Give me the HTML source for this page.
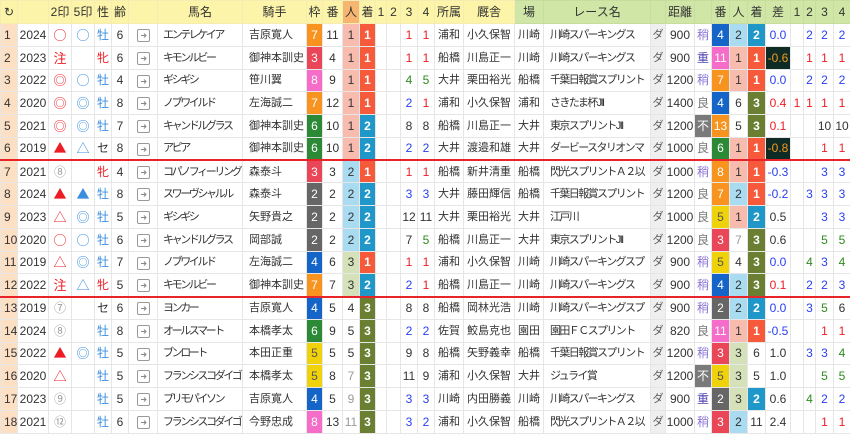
<!DOCTYPE html><html><head><meta charset="utf-8"><style>
body{margin:0;background:#fff;width:850px;height:433px;overflow:hidden}
table{border-collapse:collapse;table-layout:fixed;width:850px;font-family:"Liberation Sans","Noto Sans CJK JP",sans-serif;font-size:12px;color:#333}
td,th{padding:0;text-align:center;white-space:nowrap;overflow:hidden;border:1px solid #e6e6e6;line-height:20px}
th{font-weight:normal;height:22px;background:#fcf4a8;border-color:#f4ecb0;font-size:12px}
th.gr{background:#cfe6a6;border-color:#c6dd9e}
th.or{background:#f7b66f}
tr{height:22.75px}
td:first-child{background:#fddfc4;text-align:left;padding-left:3px}
td.l{text-align:left;padding-left:6px;font-size:11px;letter-spacing:-1.6px}
tr td.l:nth-child(8){letter-spacing:-2.4px;padding-left:5px}
td.j{text-align:left;padding-left:6px;font-size:11px;letter-spacing:0}
tr td:nth-child(3),tr td:nth-child(4){font-size:13px;font-family:"Noto Sans CJK JP",sans-serif}
tr td:nth-child(18),tr td:nth-child(19),tr td:nth-child(20){font-size:11px;letter-spacing:0}
.sep td{border-bottom:2px solid #e8232a}
.w1{background:#fff}.w2{background:#666;color:#fff}.w3{background:#e94657;color:#fff}.w4{background:#1565c8;color:#fff}.w5{background:#f0d20a;color:#555}.w6{background:#2c8a36;color:#fff}.w7{background:#f7931e;color:#fff}.w8{background:#f56dc9;color:#fff}
.p1{background:#f8bcaf}.p2{background:#a9dbf1}.p3{background:#d4e1b9}
.c1{background:#f65a3a;color:#fff;font-weight:bold}.c2{background:#1f97c9;color:#fff;font-weight:bold}.c3{background:#6a7f32;color:#fff;font-weight:bold}
.r{color:#ee1c24}.b{color:#2a3ff0}.g{color:#2e8a1e}.gy{color:#999}.sb{color:#3a8ee0}.lp{color:#8a74d6}.hv{color:#5046b0}.ok{color:#777}
td.gy{font-size:12px!important}
.da{background:#efefef;color:#555;font-size:11px}
.fu{background:#7a7a7a;color:#fff}
.dk{background:#0e2b26;color:#f59a1a}
.ar{display:inline-block;width:11px;height:11px;border:1px solid #999;border-radius:2px;vertical-align:middle;position:relative}
.ar svg{position:absolute;left:1px;top:1px}
</style></head><body>
<table>
<colgroup><col style="width:17px"><col style="width:31px"><col style="width:23px"><col style="width:23px"><col style="width:17px"><col style="width:17px"><col style="width:29px"><col style="width:85px"><col style="width:64px"><col style="width:16px"><col style="width:20px"><col style="width:17px"><col style="width:16px"><col style="width:11px"><col style="width:14px"><col style="width:17px"><col style="width:17px"><col style="width:29px"><col style="width:51px"><col style="width:29px"><col style="width:107px"><col style="width:15px"><col style="width:29px"><col style="width:17px"><col style="width:18px"><col style="width:18px"><col style="width:18px"><col style="width:25px"><col style="width:13px"><col style="width:12px"><col style="width:18px"><col style="width:17px"></colgroup>
<tr><th style="background:#fcf4a8">↻</th><th></th><th>2印</th><th>5印</th><th>性</th><th>齢</th><th></th><th>馬名</th><th>騎手</th><th>枠</th><th>番</th><th class="or">人</th><th>着</th><th>1</th><th>2</th><th>3</th><th>4</th><th>所属</th><th>厩舎</th><th class="gr">場</th><th class="gr">レース名</th><th class="gr"></th><th class="gr">距離</th><th class="gr"></th><th class="gr">番</th><th class="gr">人</th><th class="gr">着</th><th class="gr">差</th><th class="gr">1</th><th class="gr">2</th><th class="gr">3</th><th class="gr">4</th></tr>

<tr><td>1</td><td>2024</td><td class="r">○</td><td class="sb">○</td><td class="sb">牡</td><td>6</td><td><span class="ar"><svg width="9" height="9"><path d="M2 4.5H7M5 2.5L7 4.5L5 6.5" stroke="#888" fill="none"/></svg></span></td><td class="l">エンテレケイア</td><td class="j">吉原寛人</td><td class="w7">7</td><td>11</td><td class="p1">1</td><td class="c1">1</td><td></td><td></td><td class="r">1</td><td class="r">1</td><td>浦和</td><td>小久保智</td><td>川崎</td><td class="l">川崎スパーキングス</td><td class="da">ダ</td><td>900</td><td class="lp">稍</td><td class="w4">4</td><td class="p2">2</td><td class="c2">2</td><td class="b">0.0</td><td></td><td class="b">2</td><td class="b">2</td><td class="b">2</td></tr>
<tr><td>2</td><td>2023</td><td class="r">注</td><td></td><td class="r">牝</td><td>6</td><td><span class="ar"><svg width="9" height="9"><path d="M2 4.5H7M5 2.5L7 4.5L5 6.5" stroke="#888" fill="none"/></svg></span></td><td class="l">キモンルビー</td><td class="j">御神本訓史</td><td class="w3">3</td><td>4</td><td class="p1">1</td><td class="c1">1</td><td></td><td></td><td class="r">1</td><td class="r">1</td><td>船橋</td><td>川島正一</td><td>川崎</td><td class="l">川崎スパーキングス</td><td class="da">ダ</td><td>900</td><td class="hv">重</td><td class="w8">11</td><td class="p1">1</td><td class="c1">1</td><td class="dk">-0.6</td><td></td><td class="r">1</td><td class="r">1</td><td class="r">1</td></tr>
<tr><td>3</td><td>2022</td><td class="r">◎</td><td class="sb">○</td><td class="sb">牡</td><td>4</td><td><span class="ar"><svg width="9" height="9"><path d="M2 4.5H7M5 2.5L7 4.5L5 6.5" stroke="#888" fill="none"/></svg></span></td><td class="l">ギシギシ</td><td class="j">笹川翼</td><td class="w8">8</td><td>9</td><td class="p1">1</td><td class="c1">1</td><td></td><td></td><td class="g">4</td><td class="g">5</td><td>大井</td><td>栗田裕光</td><td>船橋</td><td class="l">千葉日報賞スプリント</td><td class="da">ダ</td><td>1200</td><td class="lp">稍</td><td class="w7">7</td><td class="p1">1</td><td class="c1">1</td><td class="b">0.0</td><td></td><td class="b">2</td><td class="b">2</td><td class="b">2</td></tr>
<tr><td>4</td><td>2020</td><td class="r">◎</td><td class="sb">◎</td><td class="sb">牡</td><td>8</td><td><span class="ar"><svg width="9" height="9"><path d="M2 4.5H7M5 2.5L7 4.5L5 6.5" stroke="#888" fill="none"/></svg></span></td><td class="l">ノブワイルド</td><td class="j">左海誠二</td><td class="w7">7</td><td>12</td><td class="p1">1</td><td class="c1">1</td><td></td><td></td><td class="b">2</td><td class="r">1</td><td>浦和</td><td>小久保智</td><td>浦和</td><td class="l">さきたま杯JII</td><td class="da">ダ</td><td>1400</td><td class="ok">良</td><td class="w4">4</td><td>6</td><td class="c3">3</td><td class="r">0.4</td><td class="r">1</td><td class="r">1</td><td class="r">1</td><td class="r">1</td></tr>
<tr><td>5</td><td>2021</td><td class="r">◎</td><td class="sb">◎</td><td class="sb">牡</td><td>7</td><td><span class="ar"><svg width="9" height="9"><path d="M2 4.5H7M5 2.5L7 4.5L5 6.5" stroke="#888" fill="none"/></svg></span></td><td class="l">キャンドルグラス</td><td class="j">御神本訓史</td><td class="w6">6</td><td>10</td><td class="p1">1</td><td class="c2">2</td><td></td><td></td><td>8</td><td>8</td><td>船橋</td><td>川島正一</td><td>大井</td><td class="l">東京スプリントJII</td><td class="da">ダ</td><td>1200</td><td class="fu">不</td><td class="w7">13</td><td>5</td><td class="c3">3</td><td class="r">0.1</td><td></td><td></td><td>10</td><td>10</td></tr>
<tr class="sep"><td>6</td><td>2019</td><td class="r">▲</td><td class="sb">△</td><td>セ</td><td>8</td><td><span class="ar"><svg width="9" height="9"><path d="M2 4.5H7M5 2.5L7 4.5L5 6.5" stroke="#888" fill="none"/></svg></span></td><td class="l">アピア</td><td class="j">御神本訓史</td><td class="w6">6</td><td>10</td><td class="p1">1</td><td class="c2">2</td><td></td><td></td><td class="b">2</td><td class="b">2</td><td>大井</td><td>渡邉和雄</td><td>大井</td><td class="l">ダービースタリオンマ</td><td class="da">ダ</td><td>1000</td><td class="ok">良</td><td class="w6">6</td><td class="p1">1</td><td class="c1">1</td><td class="dk">-0.8</td><td></td><td></td><td class="r">1</td><td class="r">1</td></tr>

<tr><td>7</td><td>2021</td><td class="gy">⑧</td><td></td><td class="r">牝</td><td>4</td><td><span class="ar"><svg width="9" height="9"><path d="M2 4.5H7M5 2.5L7 4.5L5 6.5" stroke="#888" fill="none"/></svg></span></td><td class="l">コパノフィーリング</td><td class="j">森泰斗</td><td class="w3">3</td><td>3</td><td class="p2">2</td><td class="c1">1</td><td></td><td></td><td class="r">1</td><td class="r">1</td><td>船橋</td><td>新井清重</td><td>船橋</td><td class="l">閃光スプリントＡ２以</td><td class="da">ダ</td><td>1000</td><td class="lp">稍</td><td class="w7">8</td><td class="p1">1</td><td class="c1">1</td><td class="b">-0.3</td><td></td><td></td><td class="b">3</td><td class="b">3</td></tr>
<tr><td>8</td><td>2024</td><td class="r">▲</td><td class="sb">▲</td><td class="sb">牡</td><td>8</td><td><span class="ar"><svg width="9" height="9"><path d="M2 4.5H7M5 2.5L7 4.5L5 6.5" stroke="#888" fill="none"/></svg></span></td><td class="l">スワーヴシャルル</td><td class="j">森泰斗</td><td class="w2">2</td><td>2</td><td class="p2">2</td><td class="c2">2</td><td></td><td></td><td class="b">3</td><td class="b">3</td><td>大井</td><td>藤田輝信</td><td>船橋</td><td class="l">千葉日報賞スプリント</td><td class="da">ダ</td><td>1200</td><td class="ok">良</td><td class="w7">7</td><td class="p2">2</td><td class="c1">1</td><td class="b">-0.2</td><td></td><td class="b">3</td><td class="b">3</td><td class="b">3</td></tr>
<tr><td>9</td><td>2023</td><td class="r">△</td><td class="sb">◎</td><td class="sb">牡</td><td>5</td><td><span class="ar"><svg width="9" height="9"><path d="M2 4.5H7M5 2.5L7 4.5L5 6.5" stroke="#888" fill="none"/></svg></span></td><td class="l">ギシギシ</td><td class="j">矢野貴之</td><td class="w2">2</td><td>2</td><td class="p2">2</td><td class="c2">2</td><td></td><td></td><td>12</td><td>11</td><td>大井</td><td>栗田裕光</td><td>大井</td><td class="l">江戸川</td><td class="da">ダ</td><td>1000</td><td class="ok">良</td><td class="w5">5</td><td class="p1">1</td><td class="c2">2</td><td>0.5</td><td></td><td></td><td class="b">3</td><td class="b">3</td></tr>
<tr><td>10</td><td>2020</td><td class="r">○</td><td class="sb">○</td><td class="sb">牡</td><td>6</td><td><span class="ar"><svg width="9" height="9"><path d="M2 4.5H7M5 2.5L7 4.5L5 6.5" stroke="#888" fill="none"/></svg></span></td><td class="l">キャンドルグラス</td><td class="j">岡部誠</td><td class="w2">2</td><td>2</td><td class="p2">2</td><td class="c2">2</td><td></td><td></td><td>7</td><td class="g">5</td><td>船橋</td><td>川島正一</td><td>大井</td><td class="l">東京スプリントJII</td><td class="da">ダ</td><td>1200</td><td class="ok">良</td><td class="w3">3</td><td class="gy">7</td><td class="c3">3</td><td>0.6</td><td></td><td></td><td class="g">5</td><td class="g">5</td></tr>
<tr><td>11</td><td>2019</td><td class="r">△</td><td class="sb">◎</td><td class="sb">牡</td><td>7</td><td><span class="ar"><svg width="9" height="9"><path d="M2 4.5H7M5 2.5L7 4.5L5 6.5" stroke="#888" fill="none"/></svg></span></td><td class="l">ノブワイルド</td><td class="j">左海誠二</td><td class="w4">4</td><td>6</td><td class="p3">3</td><td class="c1">1</td><td></td><td></td><td class="r">1</td><td class="r">1</td><td>浦和</td><td>小久保智</td><td>川崎</td><td class="l">川崎スパーキングスプ</td><td class="da">ダ</td><td>900</td><td class="lp">稍</td><td class="w5">5</td><td>4</td><td class="c3">3</td><td class="b">0.0</td><td></td><td class="g">4</td><td class="b">3</td><td class="g">4</td></tr>
<tr class="sep"><td>12</td><td>2022</td><td class="r">注</td><td class="sb">△</td><td class="r">牝</td><td>5</td><td><span class="ar"><svg width="9" height="9"><path d="M2 4.5H7M5 2.5L7 4.5L5 6.5" stroke="#888" fill="none"/></svg></span></td><td class="l">キモンルビー</td><td class="j">御神本訓史</td><td class="w7">7</td><td>7</td><td class="p3">3</td><td class="c2">2</td><td></td><td></td><td class="b">2</td><td class="r">1</td><td>船橋</td><td>川島正一</td><td>川崎</td><td class="l">川崎スパーキングス</td><td class="da">ダ</td><td>900</td><td class="lp">稍</td><td class="w4">4</td><td class="p2">2</td><td class="c3">3</td><td class="r">0.1</td><td></td><td class="b">2</td><td class="b">2</td><td class="b">3</td></tr>

<tr><td>13</td><td>2019</td><td class="gy">⑦</td><td></td><td>セ</td><td>6</td><td><span class="ar"><svg width="9" height="9"><path d="M2 4.5H7M5 2.5L7 4.5L5 6.5" stroke="#888" fill="none"/></svg></span></td><td class="l">ヨンカー</td><td class="j">吉原寛人</td><td class="w4">4</td><td>5</td><td>4</td><td class="c3">3</td><td></td><td></td><td>8</td><td>8</td><td>船橋</td><td>岡林光浩</td><td>川崎</td><td class="l">川崎スパーキングスプ</td><td class="da">ダ</td><td>900</td><td class="lp">稍</td><td class="w2">2</td><td class="p2">2</td><td class="c2">2</td><td class="b">0.0</td><td></td><td class="b">3</td><td class="g">5</td><td>6</td></tr>
<tr><td>14</td><td>2024</td><td class="gy">⑧</td><td></td><td class="sb">牡</td><td>8</td><td><span class="ar"><svg width="9" height="9"><path d="M2 4.5H7M5 2.5L7 4.5L5 6.5" stroke="#888" fill="none"/></svg></span></td><td class="l">オールスマート</td><td class="j">本橋孝太</td><td class="w6">6</td><td>9</td><td>5</td><td class="c3">3</td><td></td><td></td><td class="b">2</td><td class="b">2</td><td>佐賀</td><td>鮫島克也</td><td>園田</td><td class="l">園田ＦＣスプリント</td><td class="da">ダ</td><td>820</td><td class="ok">良</td><td class="w8">11</td><td class="p1">1</td><td class="c1">1</td><td class="b">-0.5</td><td></td><td></td><td class="r">1</td><td class="r">1</td></tr>
<tr><td>15</td><td>2022</td><td class="r">▲</td><td class="sb">◎</td><td class="sb">牡</td><td>5</td><td><span class="ar"><svg width="9" height="9"><path d="M2 4.5H7M5 2.5L7 4.5L5 6.5" stroke="#888" fill="none"/></svg></span></td><td class="l">ブンロート</td><td class="j">本田正重</td><td class="w5">5</td><td>5</td><td>5</td><td class="c3">3</td><td></td><td></td><td>9</td><td>8</td><td>船橋</td><td>矢野義幸</td><td>船橋</td><td class="l">千葉日報賞スプリント</td><td class="da">ダ</td><td>1200</td><td class="lp">稍</td><td class="w3">3</td><td class="p3">3</td><td>6</td><td>1.0</td><td></td><td class="b">3</td><td class="b">3</td><td class="g">4</td></tr>
<tr><td>16</td><td>2020</td><td class="r">△</td><td></td><td class="sb">牡</td><td>5</td><td><span class="ar"><svg width="9" height="9"><path d="M2 4.5H7M5 2.5L7 4.5L5 6.5" stroke="#888" fill="none"/></svg></span></td><td class="l">フランシスコダイゴ</td><td class="j">本橋孝太</td><td class="w5">5</td><td>8</td><td class="gy">7</td><td class="c3">3</td><td></td><td></td><td>11</td><td>9</td><td>浦和</td><td>小久保智</td><td>大井</td><td class="l">ジュライ賞</td><td class="da">ダ</td><td>1200</td><td class="fu">不</td><td class="w5">5</td><td class="p3">3</td><td>5</td><td>1.0</td><td></td><td></td><td class="g">5</td><td class="g">5</td></tr>
<tr><td>17</td><td>2023</td><td class="gy">⑨</td><td></td><td class="sb">牡</td><td>5</td><td><span class="ar"><svg width="9" height="9"><path d="M2 4.5H7M5 2.5L7 4.5L5 6.5" stroke="#888" fill="none"/></svg></span></td><td class="l">プリモパイソン</td><td class="j">吉原寛人</td><td class="w4">4</td><td>5</td><td class="gy">9</td><td class="c3">3</td><td></td><td></td><td class="b">3</td><td class="b">3</td><td>川崎</td><td>内田勝義</td><td>川崎</td><td class="l">川崎スパーキングス</td><td class="da">ダ</td><td>900</td><td class="hv">重</td><td class="w2">2</td><td class="p3">3</td><td class="c2">2</td><td>0.6</td><td></td><td class="g">4</td><td class="b">2</td><td class="b">2</td></tr>
<tr><td>18</td><td>2021</td><td class="gy">⑫</td><td></td><td class="sb">牡</td><td>6</td><td><span class="ar"><svg width="9" height="9"><path d="M2 4.5H7M5 2.5L7 4.5L5 6.5" stroke="#888" fill="none"/></svg></span></td><td class="l">フランシスコダイゴ</td><td class="j">今野忠成</td><td class="w8">8</td><td>13</td><td class="gy">11</td><td class="c3">3</td><td></td><td></td><td class="b">3</td><td class="b">2</td><td>浦和</td><td>小久保智</td><td>船橋</td><td class="l">閃光スプリントＡ２以</td><td class="da">ダ</td><td>1000</td><td class="lp">稍</td><td class="w3">3</td><td class="p2">2</td><td>11</td><td>2.4</td><td></td><td></td><td class="r">1</td><td class="r">1</td></tr>
</table>
</body></html>
